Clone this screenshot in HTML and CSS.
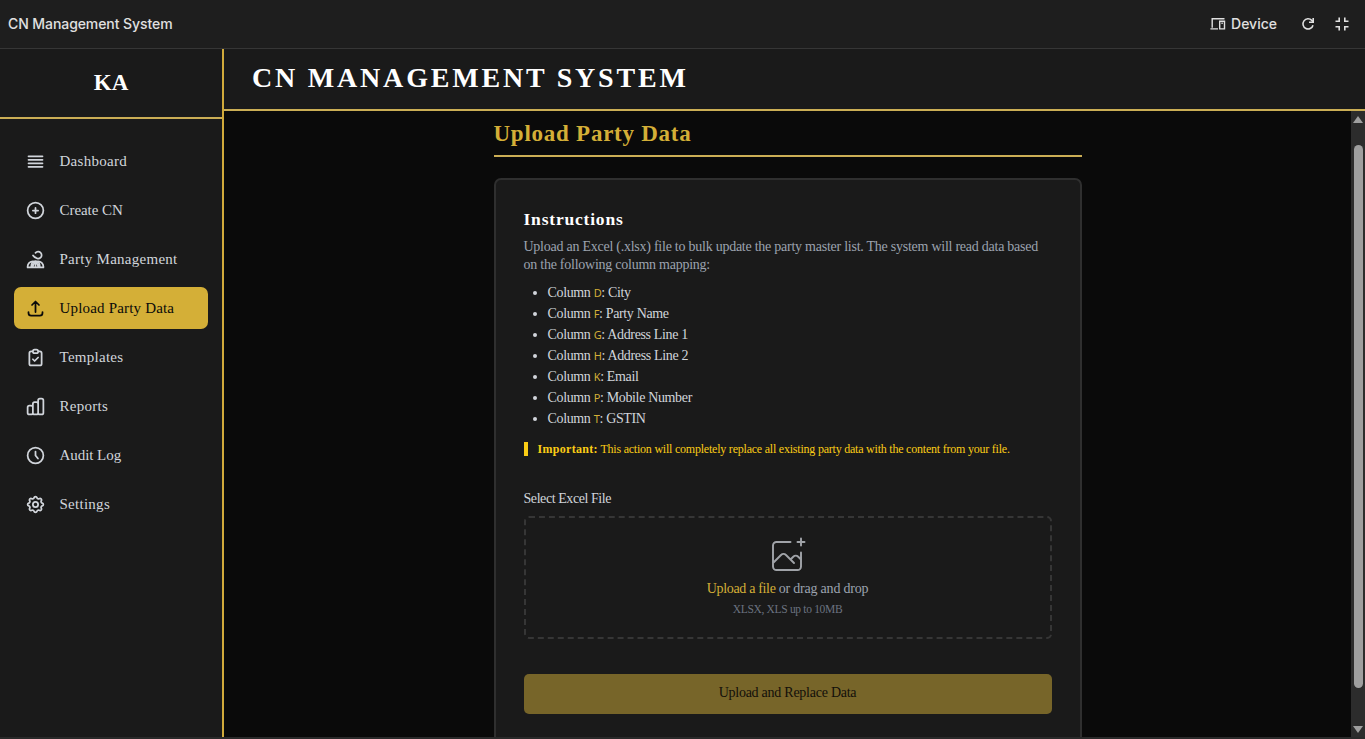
FILE: index.html
```html
<!DOCTYPE html>
<html lang="en">
<head>
<meta charset="utf-8">
<title>CN Management System</title>
<link rel="stylesheet" href="styles.css">
</head>
<body>
<div class="topbar">
  <span class="topbar-title">CN Management System</span>
  <div class="topbar-actions">
    <svg class="ic-device" viewBox="0 0 16 14" fill="none" stroke="currentColor" stroke-width="1.4"><path d="M14.500 1.700H2.200v9M.4 11.900h7.600"/><path d="M9.700 4.300h4.800v7.600H9.700z"/><path d="M11.400 6.200h1.400"/></svg>
    <span class="device">Device</span>
    <svg class="ic-refresh" viewBox="0 0 14 14" fill="none" stroke="currentColor" stroke-width="1.6"><path d="M12 8.200A5.100 5.100 0 1 1 10.800 3.400L12 4.600"/><path d="M12.200 1v4.200H8"/></svg>
    <svg class="ic-shrink" viewBox="0 0 14 14" fill="none" stroke="currentColor" stroke-width="1.6"><path d="M.5 4.200h3.700V.5M9.800.5v3.700h3.700M.5 9.800h3.700v3.700M9.800 13.500V9.800h3.700"/></svg>
  </div>
</div>
<div class="app">
  <aside class="sidebar">
    <div class="brand">KA</div>
    <nav class="nav">
      <a class="nav-item"><svg viewBox="0 0 24 24"><path d="M4 6h16M4 10h16M4 14h16M4 18h16"/></svg>Dashboard</a>
      <a class="nav-item tight"><svg viewBox="0 0 24 24"><path d="M12 9v6m3-3H9m12 0a9 9 0 1 1-18 0 9 9 0 0 1 18 0Z"/></svg>Create CN</a>
      <a class="nav-item"><svg viewBox="0 0 24 24"><path d="M12 4.354a4 4 0 1 1 0 5.292M9.200 7.400c1.200 1.900 3 3.200 5.300 3.500"/><path d="M3 21v-1a6 6 0 0 1 12 0v1M9 21v-1a6 6 0 0 1 12 0v1M3 21h18M7 21c0-4.500 2-7.200 5-7.200s5 2.700 5 7.200M12 14v7"/></svg>Party Management</a>
      <a class="nav-item active"><svg viewBox="0 0 24 24"><path d="M4 16v1a3 3 0 0 0 3 3h10a3 3 0 0 0 3-3v-1m-4-8-4-4m0 0L8 8m4-4v12"/></svg>Upload Party Data</a>
      <a class="nav-item"><svg viewBox="0 0 24 24"><path d="M9 5H7a2 2 0 0 0-2 2v12a2 2 0 0 0 2 2h10a2 2 0 0 0 2-2V7a2 2 0 0 0-2-2h-2M9 5a2 2 0 0 0 2 2h2a2 2 0 0 0 2-2M9 5a2 2 0 0 1 2-2h2a2 2 0 0 1 2 2m-6 9 2 2 4-4"/></svg>Templates</a>
      <a class="nav-item"><svg viewBox="0 0 24 24"><path d="M9 19v-6a2 2 0 0 0-2-2H5a2 2 0 0 0-2 2v6a2 2 0 0 0 2 2h2a2 2 0 0 0 2-2Zm0 0V9a2 2 0 0 1 2-2h2a2 2 0 0 1 2 2v10m-6 0a2 2 0 0 0 2 2h2a2 2 0 0 0 2-2m0 0V5a2 2 0 0 1 2-2h2a2 2 0 0 1 2 2v14a2 2 0 0 1-2 2h-2a2 2 0 0 1-2-2Z"/></svg>Reports</a>
      <a class="nav-item tight"><svg viewBox="0 0 24 24"><path d="M12 7.500V12l2.800 3.500M21 12a9 9 0 1 1-18 0 9 9 0 0 1 18 0Z"/></svg>Audit Log</a>
      <a class="nav-item"><svg viewBox="0 0 24 24"><path d="M10.325 4.317c.426-1.756 2.924-1.756 3.350 0a1.724 1.724 0 0 0 2.573 1.066c1.543-.94 3.310.826 2.370 2.370a1.724 1.724 0 0 0 1.065 2.572c1.756.426 1.756 2.924 0 3.350a1.724 1.724 0 0 0-1.066 2.573c.94 1.543-.826 3.310-2.370 2.370a1.724 1.724 0 0 0-2.572 1.065c-.426 1.756-2.924 1.756-3.350 0a1.724 1.724 0 0 0-2.573-1.066c-1.543.94-3.310-.826-2.370-2.370a1.724 1.724 0 0 0-1.065-2.572c-1.756-.426-1.756-2.924 0-3.350a1.724 1.724 0 0 0 1.066-2.573c-.94-1.543.826-3.310 2.370-2.370.996.608 2.296.07 2.572-1.065Z"/><circle cx="12" cy="12" r="3"/></svg>Settings</a>
    </nav>
  </aside>
  <div class="content">
    <header class="header"><h1>CN MANAGEMENT SYSTEM</h1></header>
    <div class="viewport">
      <main class="main">
        <h2>Upload Party Data</h2>
        <section class="card">
          <h3>Instructions</h3>
          <p class="intro">Upload an Excel (.xlsx) file to bulk update the party master list. The system will read data based<br>on the following column mapping:</p>
          <ul class="columns">
            <li>Column <code>D</code>: City</li>
            <li>Column <code>F</code>: Party Name</li>
            <li>Column <code>G</code>: Address Line 1</li>
            <li>Column <code>H</code>: Address Line 2</li>
            <li>Column <code>K</code>: Email</li>
            <li>Column <code>P</code>: Mobile Number</li>
            <li>Column <code>T</code>: GSTIN</li>
          </ul>
          <p class="warning"><strong>Important:</strong> This action will completely replace all existing party data with the content from your file.</p>
          <label class="label">Select Excel File</label>
          <div class="dropzone">
            <svg class="ic-image" viewBox="0 0 48 48"><path d="M28 8H12a4 4 0 0 0-4 4v20m32-12v8m0 0v8a4 4 0 0 1-4 4H12a4 4 0 0 1-4-4v-4m32-4-3.172-3.172a4 4 0 0 0-5.656 0L28 28M8 32l9.172-9.172a4 4 0 0 1 5.656 0L28 28m0 0 4 4m4-24h8m-4-4v8"/></svg>
            <p class="drop-main"><span class="link">Upload a file</span> or drag and drop</p>
            <p class="drop-hint">XLSX, XLS up to 10MB</p>
          </div>
          <button class="submit">Upload and Replace Data</button>
        </section>
      </main>
      <div class="scrollbar"><i class="arrow up"></i><i class="thumb"></i><i class="arrow down"></i></div>
    </div>
  </div>
</div>
</body>
</html>
```
FILE: styles.css
```css
* { box-sizing: border-box; }
body {
  margin: 0;
  height: 739px;
  overflow: hidden;
  display: flex;
  flex-direction: column;
  background: #0a0a0a;
  color: #d1d5db;
  font-family: "Liberation Serif", serif;
  font-size: 15px;
}
h1, h2, h3, p, ul { margin: 0; padding: 0; }

.topbar {
  flex: none;
  height: 49px;
  padding: 0 16px 1px 8px;
  display: flex;
  align-items: center;
  justify-content: space-between;
  background: #1e1e1e;
  border-bottom: 1px solid #363636;
  font-family: Inter, sans-serif;
  color: #e0e0e0;
}
.topbar-title { font-size: 14px; font-weight: 500; letter-spacing: -0.08px; }
.topbar-actions { display: flex; align-items: center; }
.device { font-size: 14px; font-weight: 500; margin: 0 24px 0 5px; }
.ic-device { width: 16px; height: 14px; }
.ic-refresh { width: 14px; height: 14px; margin-right: 20px; }
.ic-shrink { width: 14px; height: 14px; }

.app { flex: 1; min-height: 0; display: flex; border-bottom: 2px solid #2a2a2a; }
.sidebar {
  flex: none;
  width: 224px;
  background: #1a1a1a;
  border-right: 2px solid #d1aa3b;
}
.brand {
  height: 70px;
  display: flex;
  align-items: center;
  justify-content: center;
  border-bottom: 2px solid #cbae55;
  color: #fff;
  font-size: 23px;
  font-weight: 700;
}
.nav { padding: 21px 14px; display: flex; flex-direction: column; gap: 7px; }
.nav-item {
  height: 42px;
  padding: 0 10.5px;
  display: flex;
  align-items: center;
  gap: 14px;
  border-radius: 7px;
  letter-spacing: 0.27px;
}
.nav-item.tight { letter-spacing: -0.05px; }
.nav-item svg {
  width: 21px;
  height: 21px;
  fill: none;
  stroke: currentColor;
  stroke-width: 2;
  stroke-linecap: round;
  stroke-linejoin: round;
}
.nav-item.active { background: #d4af37; color: #0a0a0a; letter-spacing: 0.18px; }

.content { flex: 1; min-width: 0; display: flex; flex-direction: column; }
.header {
  flex: none;
  height: 62px;
  padding: 0 28px 2px;
  display: flex;
  align-items: center;
  background: #1a1a1a;
  border-bottom: 2px solid #cbae55;
}
h1 { color: #fff; font-size: 28px; line-height: 32px; letter-spacing: 2.8px; white-space: nowrap; }

.viewport { flex: 1; min-height: 0; display: flex; justify-content: space-between; overflow: hidden; }
.main { width: 588px; margin: 0 auto; padding-top: 8px; }
h2 {
  height: 38px;
  line-height: 30px;
  border-bottom: 2px solid #cbae55;
  color: #d4af37;
  font-size: 23px;
  letter-spacing: 0.75px;
}
.card {
  height: 620px;
  margin-top: 21px;
  padding: 28px;
  background: #1a1a1a;
  border: 2px solid #2f2f2f;
  border-radius: 7px;
}
h3 { color: #fff; font-size: 17.5px; line-height: 22px; letter-spacing: 0.8px; }
.intro { margin-top: 8px; color: #9ca3af; font-size: 14px; line-height: 18px; letter-spacing: -0.25px; white-space: nowrap; }
.columns { margin-top: 8px; padding-left: 24px; font-size: 14px; line-height: 21px; letter-spacing: -0.35px; }
.columns code { font-family: "Noto Sans", sans-serif; font-size: 11px; line-height: 1; color: #d4af37; }
.warning {
  margin-top: 13px;
  padding-left: 10px;
  border-left: 4px solid #facc15;
  color: #facc15;
  font-size: 12px;
  line-height: 14px;
  letter-spacing: -0.22px;
  white-space: nowrap;
}
.warning strong { letter-spacing: 0.3px; }
.label { display: block; margin-top: 34px; font-size: 14px; line-height: 18px; letter-spacing: -0.43px; }
.dropzone {
  height: 123px;
  margin-top: 8px;
  padding-top: 17px;
  display: flex;
  flex-direction: column;
  align-items: center;
  border: 2px dashed #363636;
  border-radius: 5px;
}
.ic-image { width: 42px; height: 42px; margin-right: 2px; fill: none; stroke: #a0a3a8; stroke-width: 2.2; stroke-linecap: round; stroke-linejoin: round; }
.drop-main { margin-top: 3px; color: #9ca3af; font-size: 14px; line-height: 18px; letter-spacing: -0.22px; }
.drop-main .link { color: #d4af37; letter-spacing: -0.33px; }
.drop-hint { margin-top: 4px; color: #6b7280; font-size: 11.5px; line-height: 14px; letter-spacing: -0.32px; }
.submit {
  display: block;
  width: 100%;
  height: 40px;
  margin-top: 35px;
  padding: 0 0 2px;
  border: 0;
  border-radius: 5px;
  background: #776529;
  color: #120f0a;
  font-family: inherit;
  font-size: 14px;
  letter-spacing: -0.25px;
}
.scrollbar { width: 14px; background: #2c2c2c; display: flex; flex-direction: column; align-items: center; }
.arrow { width: 0; height: 0; border: 5px solid transparent; border-top: 0; border-bottom: 7px solid #9f9f9f; margin-top: 5px; }
.arrow.down { border-bottom: 0; border-top: 7px solid #9f9f9f; margin: 38px 0 0; }
.thumb { width: 9px; height: 543px; margin-top: 22px; border-radius: 5px; background: #9f9f9f; }
```
